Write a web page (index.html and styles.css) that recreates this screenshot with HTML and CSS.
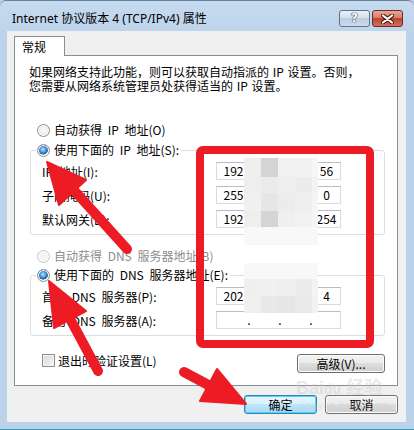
FILE: index.html
```html
<!DOCTYPE html>
<html lang="zh-CN">
<head>
    <meta charset="UTF-8">
    <title>Internet 协议版本 4 (TCP/IPv4) 属性</title>
    <link rel="stylesheet" href="styles.css">
</head>
<body>
    <div class="window">
        <div class="titlebar">
            <span class="title">Internet 协议版本 4 (TCP/IPv4) 属性</span>
            <div class="caption-btns">
                <span class="cap-btn help">?</span>
                <span class="cap-btn close">
                    <svg width="13" height="10" viewBox="0 0 13 10">
                        <path d="M2 1.5 L11 8.5 M11 1.5 L2 8.5" stroke="#4a1e18" stroke-width="4.2" stroke-linecap="round"/>
                        <path d="M2 1.5 L11 8.5 M11 1.5 L2 8.5" stroke="#fff" stroke-width="2.2" stroke-linecap="round"/>
                    </svg>
                </span>
            </div>
        </div>

        <div class="client">
            <div class="tabs"><span class="tab">常规</span></div>

            <div class="panel">
                <p class="intro">如果网络支持此功能，则可以获取自动指派的 IP 设置。否则，<br>您需要从网络系统管理员处获得适当的 IP 设置。</p>

                <div class="radio-row first"><span class="radio"></span>自动获得 IP 地址(O)</div>
                <fieldset class="group">
                    <legend><span class="radio checked"></span>使用下面的 IP 地址(S):</legend>
                    <div class="field-row">
                        <span class="field-label">IP 地址(I):</span>
                        <div class="ip-box"><span class="seg">192</span><span class="dot">.</span><span class="seg"></span><span class="dot">.</span><span class="seg"></span><span class="dot">.</span><span class="seg">56</span></div>
                    </div>
                    <div class="field-row">
                        <span class="field-label">子网掩码(U):</span>
                        <div class="ip-box"><span class="seg">255</span><span class="dot">.</span><span class="seg"></span><span class="dot">.</span><span class="seg"></span><span class="dot">.</span><span class="seg">0</span></div>
                    </div>
                    <div class="field-row">
                        <span class="field-label">默认网关(D):</span>
                        <div class="ip-box"><span class="seg">192</span><span class="dot">.</span><span class="seg"></span><span class="dot">.</span><span class="seg"></span><span class="dot">.</span><span class="seg">254</span></div>
                    </div>
                </fieldset>

                <div class="radio-row dns disabled"><span class="radio"></span>自动获得 DNS 服务器地址(B)</div>
                <fieldset class="group dns-group">
                    <legend><span class="radio checked"></span>使用下面的 DNS 服务器地址(E):</legend>
                    <div class="field-row">
                        <span class="field-label">首选 DNS 服务器(P):</span>
                        <div class="ip-box"><span class="seg">202</span><span class="dot">.</span><span class="seg"></span><span class="dot">.</span><span class="seg"></span><span class="dot">.</span><span class="seg">4</span></div>
                    </div>
                    <div class="field-row">
                        <span class="field-label">备用 DNS 服务器(A):</span>
                        <div class="ip-box"><span class="seg"></span><span class="dot">.</span><span class="seg"></span><span class="dot">.</span><span class="seg"></span><span class="dot">.</span><span class="seg"></span></div>
                    </div>
                </fieldset>

                <div class="bottom-row">
                    <div class="check-row"><span class="checkbox"></span>退出时验证设置(L)</div>
                    <button class="btn advanced">高级(V)...</button>
                </div>
            </div>

            <div class="dialog-btns">
                <button class="btn default">确定</button>
                <button class="btn">取消</button>
            </div>
        </div>

        <!-- 水印 -->
        <div class="watermark">
            <span class="wm-logo">Bai<b>du</b> 经验</span>
            <span class="wm-url">jingyan.baidu.com</span>
        </div>

        <!-- 红色标注 + 马赛克 -->
        <svg class="annotations" width="414" height="430" viewBox="0 0 414 430">
            <g class="mosaic">
                <rect x="244" y="158" width="17" height="19" fill="#efefef"/>
                <rect x="261" y="158" width="17" height="19" fill="#d4d4d4"/>
                <rect x="278" y="158" width="17" height="19" fill="#f1f1f1"/>
                <rect x="295" y="158" width="17" height="19" fill="#f1f1f1"/>
                <rect x="312" y="158" width="6" height="19" fill="#f6f6f6"/>
                <rect x="244" y="177" width="17" height="16" fill="#eeeeee"/>
                <rect x="261" y="177" width="17" height="16" fill="#ebebeb"/>
                <rect x="278" y="177" width="17" height="16" fill="#eeeeee"/>
                <rect x="295" y="177" width="17" height="16" fill="#ececec"/>
                <rect x="312" y="177" width="6" height="16" fill="#f3f3f3"/>
                <rect x="244" y="193" width="17" height="18" fill="#f0f0f0"/>
                <rect x="261" y="193" width="17" height="18" fill="#e6e6e6"/>
                <rect x="278" y="193" width="17" height="18" fill="#ececec"/>
                <rect x="295" y="193" width="17" height="18" fill="#efefef"/>
                <rect x="312" y="193" width="6" height="18" fill="#f5f5f5"/>
                <rect x="244" y="211" width="17" height="16" fill="#eeeeee"/>
                <rect x="261" y="211" width="17" height="16" fill="#d4d4d4"/>
                <rect x="278" y="211" width="17" height="16" fill="#efefef"/>
                <rect x="295" y="211" width="17" height="16" fill="#f2f2f2"/>
                <rect x="312" y="211" width="6" height="16" fill="#f5f5f5"/>
                <rect x="244" y="227" width="74" height="18" fill="#f7f8fa"/>

                <rect x="244" y="263" width="74" height="16" fill="#f8f8f8"/>
                <rect x="244" y="279" width="17" height="17" fill="#efefef"/>
                <rect x="261" y="279" width="17" height="17" fill="#f0f0f0"/>
                <rect x="278" y="279" width="17" height="17" fill="#eeeeee"/>
                <rect x="295" y="279" width="17" height="17" fill="#ececec"/>
                <rect x="312" y="279" width="6" height="17" fill="#f3f3f3"/>
                <rect x="244" y="296" width="17" height="17" fill="#f0f0f0"/>
                <rect x="261" y="296" width="17" height="17" fill="#e8e8e8"/>
                <rect x="278" y="296" width="17" height="17" fill="#e6e6e6"/>
                <rect x="295" y="296" width="17" height="17" fill="#e9e9e9"/>
                <rect x="312" y="296" width="6" height="17" fill="#f2f2f2"/>
            </g>

            <rect x="200" y="150" width="170" height="194" rx="3" fill="none" stroke="#ed1c24" stroke-width="8"/>

            <g fill="#ed1c24" stroke="#ed1c24" stroke-linecap="round">
                <line x1="127" y1="249" x2="72" y2="188" stroke-width="10"/>
                <polygon points="47,162 86,180 59,205" stroke-width="2" stroke-linejoin="round"/>

                <line x1="98" y1="371" x2="68" y2="315" stroke-width="10"/>
                <polygon points="49,281 86,311 54,328" stroke-width="2" stroke-linejoin="round"/>

                <line x1="184" y1="372" x2="214" y2="388" stroke-width="10"/>
                <polygon points="246,404 217,369 200,401" stroke-width="2" stroke-linejoin="round"/>
            </g>
        </svg>
    </div>
</body>
</html>
```

FILE: styles.css
```css
* {
    margin: 0;
    padding: 0;
    box-sizing: border-box;
}

body {
    width: 414px;
    height: 430px;
    overflow: hidden;
    font-family: "Noto Sans CJK SC", sans-serif;
    font-size: 12px;
    color: #000;
    background: #b9d1ea;
}

.window {
    position: relative;
    width: 414px;
    height: 430px;
    display: flex;
    flex-direction: column;
    background: linear-gradient(#c6daef, #bad2ea 40px);
    border-top: 1px solid #66809c;
    border-bottom: 1px solid #2f9fb8;
    border-radius: 6px 6px 0 0;
}

/* 标题栏 */
.titlebar {
    height: 30px;
    display: flex;
    align-items: center;
    padding: 5px 11px 0 12px;
}

.title {
    flex: 1;
    font-family: "Noto Sans", "Noto Sans CJK SC", sans-serif;
    font-size: 12px;
    line-height: 16px;
    color: #000;
}

.caption-btns {
    display: flex;
    gap: 2px;
}

.cap-btn {
    width: 31px;
    height: 17px;
    border-radius: 3px;
    display: flex;
    align-items: center;
    justify-content: center;
}

.help {
    border: 1px solid #5f738d;
    background: linear-gradient(#e9f0f8, #d3dfec 50%, #bccee2 50%, #cddbec);
    font-family: "DejaVu Sans", sans-serif;
    font-weight: bold;
    font-size: 12px;
    line-height: 15px;
    color: #fff;
    text-shadow: 0 0 1px #2e3d52, 0 0 1px #2e3d52, 0 0 1px #2e3d52;
}

.close {
    border: 1px solid #6a2c23;
    background: linear-gradient(#eaa595, #d97a67 50%, #c2432c 50%, #d2705c);
}

/* 客户区 */
.client {
    flex: 1;
    margin: 0 8px 7px 7px;
    padding: 5px 8px 0 7px;
    background: #f0f0f0;
}

.tabs {
    display: flex;
}

.tab {
    position: relative;
    z-index: 1;
    width: 51px;
    height: 20px;
    margin-bottom: -1px;
    padding-left: 7px;
    line-height: 19px;
    background: #fff;
    border: 1px solid #898c95;
    border-bottom: none;
}

.panel {
    background: #fff;
    border: 1px solid #898c95;
    padding: 9px 0 12px 0;
    word-spacing: 3px;
}

.intro {
    padding-left: 14px;
    line-height: 14px;
    white-space: nowrap;
    word-spacing: 1px;
}

.radio-row,
.group legend {
    display: flex;
    align-items: center;
    height: 18px;
    line-height: 18px;
}

.radio-row.first {
    margin: 28px 0 0 22px;
}

.radio-row.dns {
    margin: 12px 0 0 22px;
}

.radio-row.disabled {
    color: #8d8d8d;
}

.radio {
    width: 13px;
    height: 13px;
    margin-right: 4px;
    border-radius: 50%;
    border: 1px solid #8a8d92;
    background: radial-gradient(circle at 50% 50%, #f6f6f6 0, #f6f6f6 35%, #dcdcdc 75%, #cfcfcf 100%);
    box-shadow: inset 0 0 0 1px #fff;
    flex-shrink: 0;
}

.radio.checked {
    background: radial-gradient(circle at 45% 40%, #bfe3fb 0, #4e9ee0 30%, #1c5796 55%, #e3e3e3 60%, #d0d0d0 100%);
}

.disabled .radio {
    border-color: #c3c5c8;
    background: #f4f4f4;
}

.group {
    margin: 2px 12px 0 15px;
    padding: 0 0 3px 0;
    border: 1px solid #d5dfe5;
    border-radius: 3px;
}

.group.dns-group {
    margin-top: 1px;
}

.group legend {
    margin-left: 5px;
    padding: 0 2px 0 1px;
}

.field-row {
    display: flex;
    align-items: center;
    height: 24px;
    padding-left: 11px;
}

.field-label {
    flex: 1;
}

.ip-box {
    width: 125px;
    height: 18px;
    margin-right: 43px;
    padding-left: 3px;
    display: flex;
    align-items: center;
    border: 1px solid #d8dce2;
    border-top-color: #b8bcc4;
    background: #fff;
    line-height: 16px;
    word-spacing: 0;
}

.seg {
    flex: 1;
    text-align: center;
}

.dot {
    width: 4px;
    text-align: center;
}

.bottom-row {
    display: flex;
    align-items: flex-start;
    justify-content: space-between;
    margin: 18px 12px 0 27px;
}

.check-row {
    display: flex;
    align-items: center;
    height: 13px;
    line-height: 13px;
}

.checkbox {
    width: 13px;
    height: 13px;
    margin-right: 3px;
    border: 1px solid #8e8f8f;
    background: linear-gradient(135deg, #d8d8d8, #f7f7f7);
    box-shadow: inset 0 0 0 1px #f4f4f4;
}

.btn {
    height: 19px;
    border: 1px solid #707070;
    border-radius: 3px;
    background: linear-gradient(#f2f2f2, #ebebeb 50%, #dddddd 50%, #cfcfcf);
    box-shadow: inset 0 0 0 1px #fcfcfc;
    font-family: "Noto Sans CJK SC", sans-serif;
    font-size: 12px;
    line-height: 16px;
    color: #000;
}

.advanced {
    width: 88px;
}

.dialog-btns {
    display: flex;
    justify-content: flex-end;
    gap: 8px;
    margin-top: 9px;
}

.dialog-btns .btn {
    width: 73px;
}

.btn.default {
    border-color: #3c7fb1;
    background: linear-gradient(#eaf6fd, #d9f0fc 50%, #bee6fd 50%, #a7d9f5);
    box-shadow: inset 0 0 0 1px #48d6fb;
}

/* 水印 */
.watermark {
    position: absolute;
    left: 296px;
    top: 376px;
    display: flex;
    flex-direction: column;
    color: rgba(200, 200, 200, 0.4);
    pointer-events: none;
}

.wm-logo {
    font-family: "Liberation Sans", "Noto Sans CJK SC", sans-serif;
    font-size: 18px;
    font-weight: bold;
    line-height: 22px;
}

.wm-logo b {
    font-size: 14px;
}

.wm-url {
    font-family: "Liberation Sans", sans-serif;
    font-size: 10px;
    line-height: 12px;
    margin-left: 4px;
    letter-spacing: 0.5px;
}

.annotations {
    position: absolute;
    left: 0;
    top: -1px;
    pointer-events: none;
}
```
